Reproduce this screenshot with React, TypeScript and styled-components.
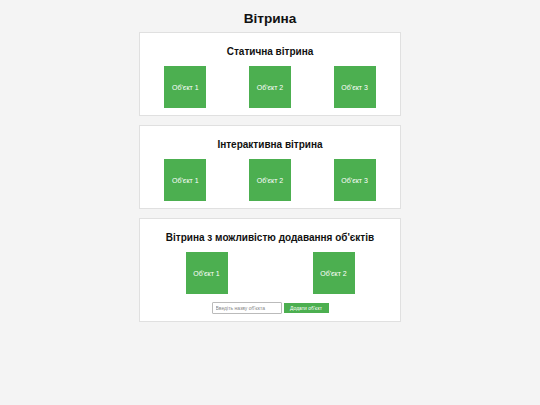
import * as React from "react";
import styled, { createGlobalStyle } from "styled-components";

const GlobalStyle = createGlobalStyle`
  body {
    margin: 0;
    background: #f4f4f4;
    font-family: "Liberation Sans", Arial, sans-serif;
    color: #111;
  }
`;

const Page = styled.div`
  width: 262px;
  margin: 0 auto;
`;

const Title = styled.h1`
  margin: 0 0 5px;
  padding-top: 11px;
  font-size: 13.6px;
  line-height: 16px;
  font-weight: bold;
  text-align: center;
`;

const Card = styled.section`
  background: #fff;
  border: 1px solid #e0e0e0;
  padding: 12px 3px 7px;
  margin-bottom: 9px;
`;

const Heading = styled.h2`
  margin: 0;
  font-size: 10px;
  line-height: 13px;
  font-weight: bold;
  text-align: center;
`;

const Items = styled.div`
  display: flex;
  justify-content: space-around;
  margin-top: 8px;
`;

const Item = styled.div`
  width: 42px;
  height: 42px;
  background: #4caf50;
  color: #fff;
  font-size: 7px;
  display: flex;
  align-items: center;
  justify-content: center;
`;

const AddRow = styled.div`
  display: flex;
  justify-content: center;
  align-items: center;
  gap: 2px;
  margin-top: 8px;
`;

const NameInput = styled.input`
  box-sizing: border-box;
  width: 70px;
  height: 12px;
  padding: 0 3px;
  border: 1px solid #bbb;
  border-radius: 1px;
  font-family: inherit;
  font-size: 5px;
  &::placeholder {
    color: #888;
  }
`;

const AddButton = styled.button`
  box-sizing: border-box;
  width: 45px;
  height: 10px;
  padding: 0;
  border: none;
  background: #4caf50;
  color: #fff;
  font-family: inherit;
  font-size: 5px;
`;

const Showcase = ({ title, items }: { title: string; items: string[] }) => (
  <Card>
    <Heading>{title}</Heading>
    <Items>
      {items.map((name) => (
        <Item key={name}>{name}</Item>
      ))}
    </Items>
  </Card>
);

export default function App() {
  const [items, setItems] = React.useState(["Об'єкт 1", "Об'єкт 2"]);
  const [name, setName] = React.useState("");
  const three = ["Об'єкт 1", "Об'єкт 2", "Об'єкт 3"];

  return (
    <Page>
      <GlobalStyle />
      <Title>Вітрина</Title>
      <Showcase title="Статична вітрина" items={three} />
      <Showcase title="Інтерактивна вітрина" items={three} />
      <Card>
        <Heading>Вітрина з можливістю додавання об'єктів</Heading>
        <Items>
          {items.map((n, i) => (
            <Item key={i}>{n}</Item>
          ))}
        </Items>
        <AddRow>
          <NameInput
            placeholder="Введіть назву об'єкта"
            value={name}
            onChange={(e) => setName(e.target.value)}
          />
          <AddButton
            onClick={() => {
              if (name.trim()) setItems([...items, name.trim()]);
              setName("");
            }}
          >
            Додати об'єкт
          </AddButton>
        </AddRow>
      </Card>
    </Page>
  );
}
